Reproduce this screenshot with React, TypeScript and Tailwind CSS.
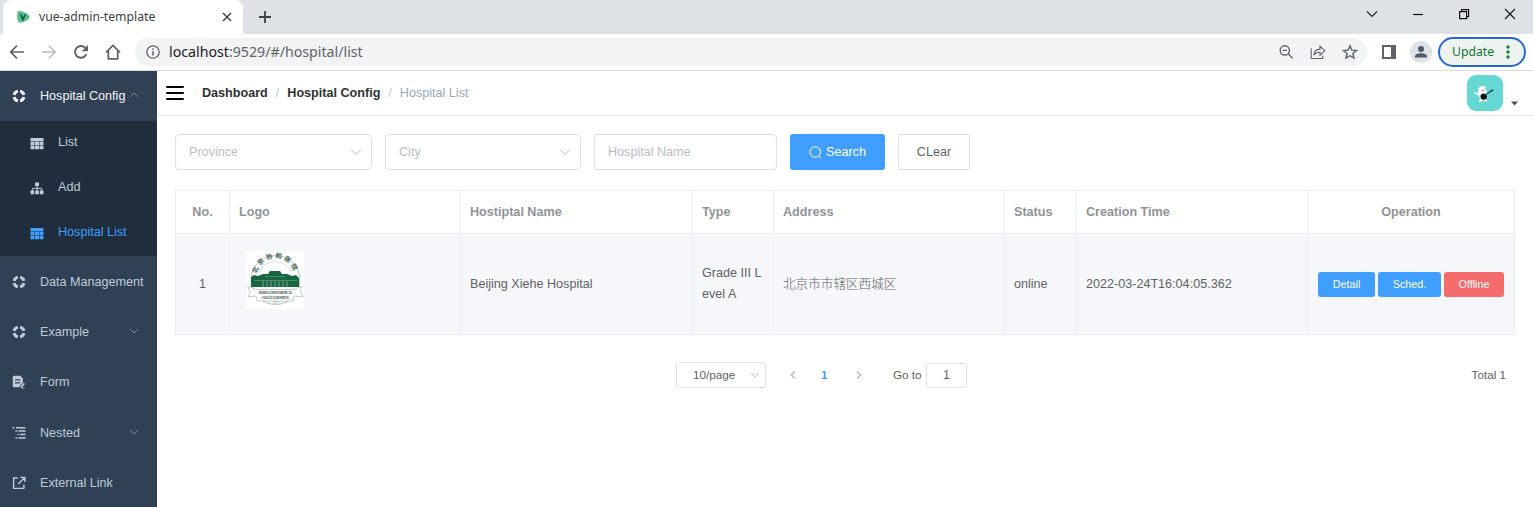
import React from "react";

type IconProps = { className?: string };

const HelpRing = ({ className = "" }: IconProps) => (
  <svg viewBox="0 0 14 14" className={`h-[14px] w-[14px] shrink-0 ${className}`} fill="none" stroke="currentColor" strokeWidth="3">
    <path d="M8.1 2.1A5 5 0 0 1 11.9 5.9M11.9 8.1A5 5 0 0 1 8.1 11.9M5.9 11.9A5 5 0 0 1 2.1 8.1M2.1 5.9A5 5 0 0 1 5.9 2.1" />
  </svg>
);

const TableIcon = ({ className = "" }: IconProps) => (
  <svg viewBox="0 0 14 13" className={`h-[13px] w-[14px] shrink-0 ${className}`} fill="currentColor">
    <path d="M0.5 1h13v3h-13zM0.5 4.6h4v3.4h-4zM5 4.6h4v3.4h-4zM9.5 4.6h4v3.4h-4zM0.5 8.5h4v3.8h-4zM5 8.5h4v3.8h-4zM9.5 8.5h4v3.8h-4z" />
  </svg>
);

const TreeIcon = ({ className = "" }: IconProps) => (
  <svg viewBox="0 0 14 13" className={`h-[13px] w-[14px] shrink-0 ${className}`}>
    <path d="M5 0.5h4v3.6H5zM0.5 8.5h3.7v3.7H0.5zM5.2 8.5h3.7v3.7H5.2zM9.8 8.5h3.7v3.7H9.8z" fill="currentColor" />
    <path d="M7 4v5M2.4 9V6.3h9.3V9" stroke="currentColor" strokeWidth="1" fill="none" />
  </svg>
);

const FormIcon = () => (
  <svg viewBox="0 0 14 14" className="h-[14px] w-[14px] shrink-0">
    <path d="M1.8 0.8h6.4l2.6 2.8v4.2L8 10.6l-.7 1.7H1.8a1 1 0 0 1-1-1V1.8a1 1 0 0 1 1-1z" fill="currentColor" />
    <path d="M3 4.9h5.4M3 7.8h5" stroke="#304156" strokeWidth="1.2" />
    <path d="M8.8 12.2l3.6-3.8" stroke="currentColor" strokeWidth="1.8" />
    <path d="M9 13h3.4" stroke="currentColor" strokeWidth="0.8" />
  </svg>
);

const NestedIcon = () => (
  <svg viewBox="0 0 14 14" className="h-[14px] w-[14px] shrink-0" stroke="currentColor" strokeWidth="1.5">
    <path d="M0.5 1.7h1.8M4 1.7h9.5M3.4 5h1.8M6.4 5h7.1M5.4 8.4h1.4M8 8.4h5.5M3.4 11.9h1.8M6.4 11.9h7.1" />
  </svg>
);

const ExternalIcon = () => (
  <svg viewBox="0 0 14 14" className="h-[14px] w-[14px] shrink-0" fill="none" stroke="currentColor" strokeWidth="1.4">
    <path d="M5.8 2H1.6v10.4h10.3V8.4M8.2 1.4h4.7v4.5M12.6 1.7L6.2 8" />
  </svg>
);

const Chevron = ({ d, className = "" }: { d: string; className?: string }) => (
  <svg viewBox="0 0 12 12" className={`h-3 w-3 shrink-0 ${className}`} fill="none" stroke="currentColor" strokeWidth="1">
    <path d={d} />
  </svg>
);
const DOWN = "M1.2 3.6L6 8.4L10.8 3.6";
const DOWN_SM = "M2 4L6 8L10 4";
const UP_SM = "M2 8L6 4L10 8";

function TabStrip() {
  return (
    <div className="flex h-[34px] items-stretch bg-[#dee1e6] text-[#3c4043]">
      <div className="w-[3px] bg-[#dee1e6]" />
      <div className="flex w-[240px] items-center rounded-t-lg bg-white pl-[13px]">
        <svg viewBox="0 0 14 14" className="h-[14px] w-[14px]">
          <path d="M2 1.4C5-.2 13 3.8 13.6 6.6S6 13.4 3.4 12.4.4 2.4 2 1.4z" fill="#52c08d" />
          <path d="M4.5 4.3L6.9 9.6 9.2 4.3" fill="none" stroke="#20503f" strokeWidth="1.5" />
        </svg>
        <span className="ml-[9px] w-[178px] font-['Noto_Sans'] text-[12.2px] leading-4">vue-admin-template</span>
        <svg viewBox="0 0 10 10" className="ml-[5px] h-[10px] w-[10px]" stroke="#3c4043" strokeWidth="1.5">
          <path d="M1 1l8 8M9 1l-8 8" />
        </svg>
      </div>
      <svg viewBox="0 0 12 12" className="mt-[11px] ml-[16px] h-3 w-3" stroke="#3c4043" strokeWidth="1.8">
        <path d="M6 0v12M0 6h12" />
      </svg>
      <div className="ml-auto flex items-start gap-[34px] pt-[8px] pr-[17px]">
        <svg viewBox="0 0 12 12" className="h-3 w-3" fill="none" stroke="#222" strokeWidth="1.1"><path d="M1 3.5l5 5 5-5" /></svg>
        <svg viewBox="0 0 12 12" className="h-3 w-3" stroke="#111" strokeWidth="1.2"><path d="M1 6.5h10" /></svg>
        <svg viewBox="0 0 12 12" className="h-3 w-3" fill="none" stroke="#111" strokeWidth="1.2"><path d="M1.6 3.6h7v7h-7zM3.6 3.4V1.6h7v7H8.8" /></svg>
        <svg viewBox="0 0 12 12" className="h-3 w-3" stroke="#111" strokeWidth="1.1"><path d="M1 1l10 10M11 1L1 11" /></svg>
      </div>
    </div>
  );
}

function Toolbar() {
  return (
    <div className="flex h-[37px] items-center border-b border-[#d8dbdf] bg-white pl-[9px]">
      <svg viewBox="0 0 16 16" className="h-4 w-4" fill="none" stroke="#5f6368" strokeWidth="1.7"><path d="M15 8H2M8 1.7L1.7 8 8 14.3" /></svg>
      <svg viewBox="0 0 16 16" className="ml-[16px] h-4 w-4" fill="none" stroke="#babcbe" strokeWidth="1.5"><path d="M1 8h13M8 1.7L14.3 8 8 14.3" /></svg>
      <svg viewBox="0 0 16 16" className="ml-[16px] h-4 w-4">
        <path d="M13.4 10.2A5.9 5.9 0 1 1 12.6 4.2" fill="none" stroke="#5f6368" strokeWidth="1.9" />
        <path d="M15 .9v6.3H8.7z" fill="#5f6368" />
      </svg>
      <svg viewBox="0 0 16 16" className="ml-[16px] h-4 w-4" fill="none" stroke="#5f6368" strokeWidth="1.7"><path d="M1 8.3L8 1.5l7 6.8M3.3 6.8v8h9.4v-8" /></svg>
      <div className="ml-[14px] flex h-7 w-[1232px] items-center rounded-full bg-[#f1f3f4] pl-[11px]">
        <svg viewBox="0 0 14 14" className="h-[14px] w-[14px]" fill="none" stroke="#5f6368" strokeWidth="1.3">
          <circle cx="7" cy="7" r="6.2" />
          <path d="M7 6.2v4.2M7 3.4v1.6" strokeWidth="1.5" />
        </svg>
        <span className="ml-[9px] font-['Noto_Sans'] text-[14.2px] leading-5 text-[#5f6368]">
          <span className="text-[#202124]">localhost</span>:9529/#/hospital/list
        </span>
        <div className="ml-auto flex items-center gap-[16px] pr-[9px]">
          <svg viewBox="0 0 16 16" className="h-4 w-4" fill="none" stroke="#5f6368" strokeWidth="1.4"><circle cx="6.8" cy="6.4" r="4.6" /><path d="M10.2 9.8l4.4 4.4M4.6 6.4H9" /></svg>
          <svg viewBox="0 0 16 16" className="h-4 w-4" fill="none" stroke="#5f6368" strokeWidth="1.1"><path d="M1.2 4.5v10h11.5v-3M3.8 11.3c.4-4 2.5-6 6.2-6.2V2.2l4.8 4.6L10 11.2V8.3c-2.8 0-4.8.9-6.2 3z" /></svg>
          <svg viewBox="0 0 16 16" className="h-4 w-4" fill="none" stroke="#5f6368" strokeWidth="1.4"><path d="M8 1.8l1.8 4.3 4.7.4-3.6 3 1.1 4.6L8 11.7l-4 2.4 1.1-4.6-3.6-3 4.7-.4z" /></svg>
        </div>
      </div>
      <svg viewBox="0 0 14 14" className="ml-[15px] h-[14px] w-[14px]"><path d="M0 0h14v14H0zM2 2v10h7V2z" fill="#5f6368" fillRule="evenodd" /></svg>
      <svg viewBox="0 0 22 22" className="ml-[14px] h-[22px] w-[22px]">
        <circle cx="11" cy="11" r="11" fill="#dee1e6" />
        <circle cx="11" cy="8" r="3" fill="#4d5768" />
        <path d="M5 16.6v-1.4c0-2 3.5-3 6-3s6 1 6 3v1.4z" fill="#4d5768" />
      </svg>
      <div className="ml-[6px] flex h-[30px] w-[88px] items-center rounded-full border-2 border-[#2469ce] bg-[#eef3f0] pl-[12px] text-[#137333]">
        <span className="w-[54px] font-['Noto_Sans'] text-[12.2px] leading-4">Update</span>
        <svg viewBox="0 0 4 14" className="h-[14px] w-1" fill="#188038"><circle cx="2" cy="2" r="1.7" /><circle cx="2" cy="7" r="1.7" /><circle cx="2" cy="12" r="1.7" /></svg>
      </div>
    </div>
  );
}

type MenuRowProps = { icon: React.ReactNode; label: string; arrow?: string; active?: boolean };
const MenuRow = ({ icon, label, arrow, active }: MenuRowProps) => (
  <div className={`flex h-[50.4px] w-[157px] shrink-0 items-center pl-[12px] whitespace-nowrap ${active ? "text-[#f4f4f5]" : "text-[#bfcbd9]"}`}>
    <span className="w-[28px] shrink-0">{icon}</span>
    <span className={arrow ? "w-[88px]" : ""}>{label}</span>
    {arrow && <Chevron d={arrow} className="-mt-0.5 text-[#7e8997]" />}
  </div>
);

const SubRow = ({ icon, label, active }: MenuRowProps) => (
  <div className={`flex h-[45px] items-center pb-[3px] pl-[30px] ${active ? "text-[#409eff]" : "text-[#bfcbd9]"}`}>
    <span className="w-[28px] pt-[2px]">{icon}</span>
    <span>{label}</span>
  </div>
);

function Sidebar() {
  return (
    <aside className="flex w-[157px] shrink-0 flex-col overflow-hidden bg-[#304156]">
      <MenuRow icon={<HelpRing />} label="Hospital Config" arrow={UP_SM} active />
      <div className="bg-[#1f2d3d]">
        <SubRow icon={<TableIcon />} label="List" />
        <SubRow icon={<TreeIcon />} label="Add" />
        <SubRow icon={<TableIcon />} label="Hospital List" active />
      </div>
      <MenuRow icon={<HelpRing />} label="Data Management" />
      <MenuRow icon={<HelpRing />} label="Example" arrow={DOWN_SM} />
      <MenuRow icon={<FormIcon />} label="Form" />
      <MenuRow icon={<NestedIcon />} label="Nested" arrow={DOWN_SM} />
      <MenuRow icon={<ExternalIcon />} label="External Link" />
    </aside>
  );
}

function Navbar() {
  return (
    <header className="flex h-[45px] items-center border-b border-[#dfe2e6] pl-[9px]">
      <svg viewBox="0 0 18 14" className="h-[14px] w-[18px]" stroke="#000" strokeWidth="2" strokeLinecap="round"><path d="M1 1h16M1 7h16M1 13h16" /></svg>
      <nav className="ml-[18px] flex">
        <span className="font-bold text-[#303133]">Dashboard</span>
        <span className="mx-[8px] text-[#c0c4cc]">/</span>
        <span className="font-bold text-[#303133]">Hospital Config</span>
        <span className="mx-[8px] text-[#c0c4cc]">/</span>
        <span className="text-[#97a8be]">Hospital List</span>
      </nav>
      <div className="mr-[15px] ml-auto flex items-end gap-[8px]">
        <svg viewBox="0 0 36 36" className="h-9 w-9 rounded-[9px] bg-[#65d8d3]">
          <path d="M11 14c1-3 5-4 8-2l-1 2 2 2-1 8 1 3h-2l-1-2-3 2h-2l1-4-2-3-3-1-1-2 4 1z" fill="#fff" />
          <circle cx="16.7" cy="21.6" r="3.2" fill="#111" />
          <path d="M18 20l8-5" stroke="#23514f" strokeWidth="1.3" />
          <path d="M22.500 16l3.500-2 .5 1.500-3.500 2z" fill="#245956" />
          <path d="M14.500 15.500h3" stroke="#c99" strokeWidth="1" />
        </svg>
        <svg viewBox="0 0 7 5" className="mb-[5px] h-[5px] w-[7px]"><path d="M0 .5h7L3.500 4.500z" fill="#4b4f55" /></svg>
      </div>
    </header>
  );
}

function Filters() {
  return (
    <div className="flex h-9 text-[#b8bdc7]">
      <div className="flex w-[197px] items-center justify-between rounded border border-[#dcdfe6] pr-[9px] pl-[13px]">
        Province<Chevron d={DOWN} />
      </div>
      <div className="ml-[13px] flex w-[196px] items-center justify-between rounded border border-[#dcdfe6] pr-[9px] pl-[13px]">
        City<Chevron d={DOWN} />
      </div>
      <div className="ml-[13px] flex w-[183px] items-center rounded border border-[#dcdfe6] pl-[13px]">Hospital Name</div>
      <button className="ml-[13px] flex w-[95px] items-center rounded-[3px] bg-[#409eff] pl-[19px] text-white">
        <svg viewBox="0 0 13 13" className="mr-[4px] h-[13px] w-[13px]" fill="none" stroke="currentColor"><circle cx="6.200" cy="6" r="5.200" /><path d="M9.600 9.600l2.200 2.600" /></svg>
        Search
      </button>
      <button className="ml-[13px] w-[72px] rounded-[3px] border border-[#dcdfe6] text-[#606266]">CLear</button>
    </div>
  );
}

const HospitalLogo = () => (
  <svg viewBox="0 0 58 58" className="h-[58px] w-[58px] bg-white">
    <defs><path id="arc" d="M10.500 26A19 19 0 0 1 48.500 26" /></defs>
    <circle cx="29.500" cy="29" r="24.500" fill="none" stroke="#9db5ac" strokeWidth="0.8" />
    <path d="M12.500 22A18 18 0 0 1 46 22" fill="none" stroke="#c3d3cc" strokeWidth="0.6" />
    <text fontFamily="'Noto Sans CJK SC', sans-serif" fontSize="6.500" fontWeight="700" fill="#3c6355" letterSpacing="2.200">
      <textPath href="#arc" startOffset="3">北京协和医院</textPath>
    </text>
    <path d="M5 26l3-2 4 1 5-2h5l2-3h10l2 3h5l5 2 4-1 3 3v9H5z" fill="#17663f" />
    <path d="M8 29.500h43M19 25.500h20" stroke="#5e9c7e" strokeWidth="0.7" />
    <path d="M17 30v6M21 30v6M25 30v6M29 30v6M33 30v6M37 30v6M41 30v6" stroke="#8bb8a1" strokeWidth="0.8" />
    <path d="M1.500 35.500L10 38.500h37l9-3-2 4.500 3 6-9-1-1 5H11l-1-5-8 1 2-5.500z" fill="#fff" stroke="#a9b8b1" strokeWidth="0.7" />
    <text x="29.500" y="43" textAnchor="middle" fontFamily="'Liberation Serif', serif" fontWeight="700" fontSize="3.400" fill="#46514c" textLength="34">PEKING UNION MEDICAL</text>
    <text x="29.500" y="48" textAnchor="middle" fontFamily="'Liberation Serif', serif" fontWeight="700" fontSize="3.400" fill="#46514c" textLength="28">COLLEGE HOSPITAL</text>
    <text x="29.500" y="53.200" textAnchor="middle" fontFamily="'Liberation Serif', serif" fontSize="3" fill="#88958f">1921</text>
  </svg>
);

const COLS = "grid grid-cols-[54px_231px_232px_81px_231px_72px_231px_207px]";
const CELL = "flex items-center border-r border-b border-[#ebeef5] pl-[9px]";
const CELL_C = "flex items-center justify-center border-r border-b border-[#ebeef5]";

function HospitalTable() {
  return (
    <div className="mt-5 w-[1340px] border-t border-l border-[#ebeef5] text-[#606266]">
      <div className={`${COLS} h-[43px] font-bold text-[#909399]`}>
        <div className={CELL_C}>No.</div>
        <div className={CELL}>Logo</div>
        <div className={CELL}>Hostiptal Name</div>
        <div className={CELL}>Type</div>
        <div className={CELL}>Address</div>
        <div className={CELL}>Status</div>
        <div className={CELL}>Creation Time</div>
        <div className={CELL_C}>Operation</div>
      </div>
      <div className={`${COLS} h-[101px] bg-[#f5f7fa]`}>
        <div className={CELL_C}>1</div>
        <div className="flex items-center border-r border-b border-[#ebeef5] pb-[8px] pl-[16px]"><HospitalLogo /></div>
        <div className={CELL}>Beijing Xiehe Hospital</div>
        <div className={`${CELL} leading-[20.7px]`}><div>Grade III L<br />evel A</div></div>
        <div className={`${CELL} font-light`}>北京市市辖区西城区</div>
        <div className={CELL}>online</div>
        <div className={CELL}>2022-03-24T16:04:05.362</div>
        <div className={`${CELL_C} gap-[3px] text-[10.8px] text-white`}>
          <button className="h-[25px] w-[57px] rounded-[3px] bg-[#409eff]">Detail</button>
          <button className="h-[25px] w-[63px] rounded-[3px] bg-[#409eff]">Sched.</button>
          <button className="h-[25px] w-[60px] rounded-[3px] bg-[#f56c6c]">Offline</button>
        </div>
      </div>
    </div>
  );
}

function Pagination() {
  return (
    <div className="mt-[27px] flex h-[26px] items-center pl-[501px] text-[11.7px] text-[#606266]">
      <div className="flex h-[26px] w-[90px] items-center justify-between rounded-[3px] border border-[#dcdfe6] pr-[4px] pl-[16px]">
        10/page<Chevron d={DOWN_SM} className="text-[#c0c4cc]" />
      </div>
      <svg viewBox="0 0 12 12" className="ml-[21px] h-3 w-3" fill="none" stroke="#b4b8bf" strokeWidth="1.400"><path d="M8 2.500L4.300 6 8 9.500" /></svg>
      <span className="ml-[22px] w-[6px] font-bold text-[#409eff]">1</span>
      <svg viewBox="0 0 12 12" className="ml-[26px] h-3 w-3" fill="none" stroke="#b4b8bf" strokeWidth="1.400"><path d="M4 2.500L7.700 6 4 9.500" /></svg>
      <span className="ml-[28px] w-[33px] whitespace-nowrap">Go to</span>
      <div className="flex h-[25px] w-[41px] items-center justify-center rounded-[3px] border border-[#dcdfe6] text-[12.6px]">1</div>
      <span className="mr-[27px] ml-auto">Total 1</span>
    </div>
  );
}

export default function App() {
  return (
    <div className="flex h-[507px] w-[1533px] flex-col overflow-hidden bg-white font-['Liberation_Sans','Noto_Sans_CJK_SC',sans-serif] text-[12.6px] leading-4">
      <TabStrip />
      <Toolbar />
      <div className="flex min-h-0 flex-1">
        <Sidebar />
        <main className="flex min-w-0 flex-1 flex-col">
          <Navbar />
          <section className="pt-[18px] pl-[18px]">
            <Filters />
            <HospitalTable />
            <Pagination />
          </section>
        </main>
      </div>
    </div>
  );
}
